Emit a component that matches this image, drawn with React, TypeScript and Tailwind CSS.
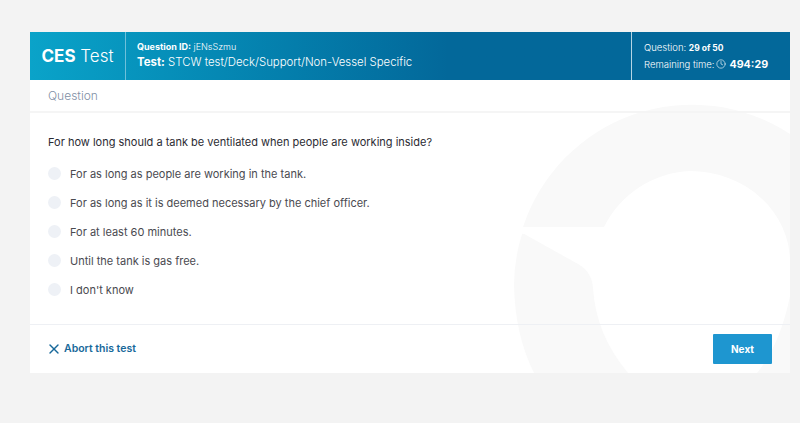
import { Clock, X } from "lucide-react";

const options = [
  "For as long as people are working in the tank.",
  "For as long as it is deemed necessary by the chief officer.",
  "For at least 60 minutes.",
  "Until the tank is gas free.",
  "I don't know",
];

export default function App() {
  return (
    <div className="min-h-[423px] bg-[#f3f3f3] pt-8 pl-[30px] pr-[10px] font-['Inter','Liberation_Sans',sans-serif]">
      <div className="relative h-[341px] overflow-hidden bg-white flex flex-col">
        <svg className="absolute inset-0" width="760" height="341" viewBox="30 32 760 341" fill="#f9f9f9" aria-hidden="true">
          <path d="M523 227 A178 178 0 0 1 790 134 L790 262 A100 91 0 0 0 690 171 A100 100 0 0 0 604 227 Z" />
          <path d="M522 234 Q514 260 514 285 Q515 335 534 373 L628 373 Q596 335 593 288 Q592 272 578 264 L526 235 Q523 233 522 234 Z" />
          <path d="M757 373 Q780 345 790 296 L790 373 Z" />
        </svg>
        <div className="relative h-12 flex text-white bg-gradient-to-r from-[#0aa3c9] from-0% to-[#03689a] to-55%">
          <div className="w-[96px] pt-px border-r border-r-[#6fc0da] flex items-center justify-center text-[17px]">
            <span className="font-bold">CES</span>&nbsp;<span className="font-light">Test</span>
          </div>
          <div className="flex-1 pl-[11px] pb-px flex flex-col justify-center">
            <div className="text-[9px] leading-[14px] font-light">
              <span className="font-bold">Question ID:</span> jENsSzmu
            </div>
            <div className="text-[11.4px] leading-[17px] font-light">
              <span className="font-bold">Test:</span> STCW test/Deck/Support/Non-Vessel Specific
            </div>
          </div>
          <div className="w-[159px] border-l border-l-[#b5d5e4] pl-[12px] flex flex-col justify-center">
            <div className="text-[9.5px] leading-[15px] font-light">
              Question: <span className="text-[8.5px] font-bold">29 of 50</span>
            </div>
            <div className="text-[9.5px] leading-[17px] font-light flex items-center gap-[2px]">
              Remaining time:
              <Clock size={10} strokeWidth={1.5} />
              <span className="text-[10.7px] font-bold ml-px">494:29</span>
            </div>
          </div>
        </div>
        <div className="relative h-[33px] border-b-2 border-b-[#f5f5f5] pl-[18px] flex items-center text-[12px] text-[#7f8fa6] font-light">
          Question
        </div>
        <div className="relative flex-1 pl-[18px] pt-[21px]">
          <div className="text-[11px] leading-[16px] text-[#2b2b33]">
            For how long should a tank be ventilated when people are working inside?
          </div>
          <div className="mt-[9px] flex flex-col">
            {options.map((o) => (
              <div key={o} className="h-[29px] flex items-center gap-[9px]">
                <span className="w-[13px] h-[13px] rounded-full bg-[#eef1f6]" />
                <span className="text-[11px] pt-[2px] text-[#4a4a50]">{o}</span>
              </div>
            ))}
          </div>
        </div>
        <div className="relative h-[49px] border-t border-t-[#eef0f4] pl-[18px] pr-[18px] flex items-center justify-between">
          <div className="flex items-center gap-[2px] text-[10.5px] font-semibold text-[#17689a]">
            <X size={16} strokeWidth={2} className="-ml-[2px]" />
            Abort this test
          </div>
          <button className="w-[59px] h-[30px] rounded-[1px] bg-[#1e96d0] text-white text-[10px] font-bold">
            Next
          </button>
        </div>
      </div>
    </div>
  );
}
